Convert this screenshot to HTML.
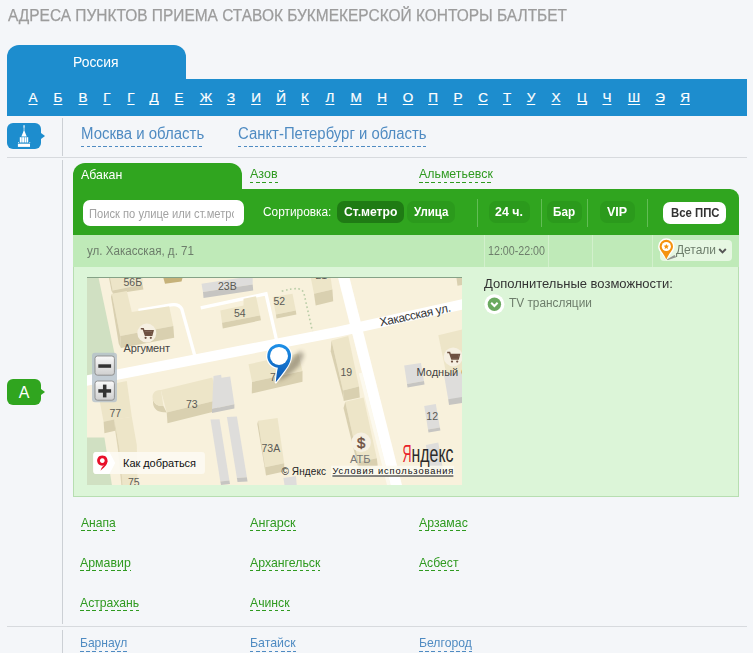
<!DOCTYPE html>
<html><head><meta charset="utf-8">
<style>
*{box-sizing:border-box;margin:0;padding:0}
html,body{width:753px;height:653px;overflow:hidden;background:#f4f6f9;font-family:"Liberation Sans",sans-serif;}
.abs{position:absolute}
.t{position:absolute;white-space:nowrap}
.t span{display:inline-block;transform-origin:0 0;white-space:nowrap}
i{font-style:normal}
#tab{left:7px;top:45px;width:179px;height:36px;background:#1d8dce;border-radius:12px 12px 0 0}
#bar{left:7px;top:79px;width:740px;height:36.500px;background:#1d8dce}
#bar a{position:absolute;top:9.600px;color:#fff;font-size:13.5px;text-decoration:underline;text-decoration-skip-ink:none;text-underline-offset:1.5px;transform:translateX(-50%);line-height:18px;-webkit-text-stroke:0.2px #fff}
.hl{height:1px;background:#d7dade;left:7px;width:740px}
.vl{width:1px;background:#ccd0d5;left:62px}
.ibox{left:7px;width:34px;height:26px;border-radius:6px}
.ibox:after{content:"";position:absolute;left:34px;top:10px;border-left:4.500px solid;border-top:3px solid transparent;border-bottom:3px solid transparent;border-left-color:inherit}
#gtab{left:73px;top:163px;width:169px;height:28px;background:#30a51f;border-radius:12px 12px 0 0}
#gbar{left:73px;top:189px;width:666px;height:46px;background:#30a51f;border-radius:0 9px 0 0}
#search{left:83px;top:200px;width:161px;height:26px;background:#fff;border-radius:7px;color:#a2a2a2;font-size:12px;line-height:26px;padding-left:5.700px;white-space:nowrap;overflow:hidden}
#search span{display:block;width:155.500px;overflow:hidden;transform:scaleX(0.93);transform-origin:0 0;position:relative;top:0.5px}
.btn{top:200.500px;height:22.500px;border-radius:7px}
.sep{top:198.500px;width:1px;height:28px;background:#62bd55}
#row{left:73px;top:235px;width:666px;height:32px;background:#bfeab8}
.rs{top:235px;width:1px;height:32px;background:#d2f0cc}
#panel{left:73px;top:267px;width:666px;height:230px;background:#dcf5d8;border:1px solid #b7deb1;border-top:none}
</style></head><body>
<div class="abs" id="tab"></div>
<div class="abs" id="bar"><a style="left:26px">А</a><a style="left:51px">Б</a><a style="left:76px">В</a><a style="left:100px">Г</a><a style="left:124px">Г</a><a style="left:147px">Д</a><a style="left:172px">Е</a><a style="left:199px">Ж</a><a style="left:224px">З</a><a style="left:249px">И</a><a style="left:274px">Й</a><a style="left:298px">К</a><a style="left:323px">Л</a><a style="left:349px">М</a><a style="left:375px">Н</a><a style="left:401px">О</a><a style="left:426px">П</a><a style="left:451px">Р</a><a style="left:476px">С</a><a style="left:500px">Т</a><a style="left:524px">У</a><a style="left:549px">Х</a><a style="left:575px">Ц</a><a style="left:600px">Ч</a><a style="left:627px">Ш</a><a style="left:653px">Э</a><a style="left:678px">Я</a></div>
<!-- region row -->
<div class="abs ibox" style="top:123px;background:#1d8dce;border-left-color:#1d8dce">
<svg width="34" height="26" viewBox="0 0 34 26" style="position:absolute;left:0;top:0"><g fill="#fff"><rect x="16.450" y="2.200" width="1.200" height="2.500"/><rect x="16.600" y="4.500" width="0.900" height="5" opacity=".8"/><path d="M16.500 8.300h1.100l2.100 5.300h-5.300z"/><rect x="12.800" y="14.200" width="1.900" height="5.300"/><rect x="15.150" y="14.200" width="1.900" height="5.300"/><rect x="17.500" y="14.200" width="1.900" height="5.300"/><rect x="19.800" y="14.200" width="1.400" height="5.300"/><rect x="11" y="19" width="0.900" height="1" opacity=".8"/><rect x="22.300" y="19" width="0.900" height="1" opacity=".8"/><rect x="10.900" y="20.700" width="12.100" height="3.200"/></g></svg>
</div>
<div class="abs vl" style="top:118px;height:38px"></div>
<div class="abs hl" style="top:157px"></div>
<div class="abs vl" style="top:160px;height:464px"></div>
<!-- A box -->
<div class="abs ibox" style="top:379px;background:#30a51f;border-left-color:#30a51f;color:#fff;font-size:16px;text-align:center;line-height:27px">A</div>
<!-- green tab -->
<div class="abs" id="gtab"></div>
<div class="abs" id="gbar"></div>
<div class="abs" id="search"><span>Поиск по улице или ст.метро</span></div>
<div class="abs btn" style="left:337px;width:67px;background:#1f7b14"></div>
<div class="abs btn" style="left:407px;width:48px;background:#2b9a1c"></div>
<div class="abs sep" style="left:477px"></div>
<div class="abs btn" style="left:488.500px;width:41px;background:#2b9a1c"></div>
<div class="abs sep" style="left:541px"></div>
<div class="abs btn" style="left:547px;width:34.500px;background:#2b9a1c"></div>
<div class="abs sep" style="left:587px"></div>
<div class="abs btn" style="left:599.500px;width:35px;background:#2b9a1c"></div>
<div class="abs sep" style="left:647px"></div>
<div class="abs btn" style="left:663px;top:202px;width:63px;height:22px;background:#fff;border-radius:7px"></div>
<!-- row -->
<div class="abs" id="row"></div>
<div class="abs rs" style="left:483.500px"></div><div class="abs rs" style="left:548px"></div><div class="abs rs" style="left:592px"></div><div class="abs rs" style="left:652px"></div>
<div class="abs" style="left:660px;top:240px;width:72px;height:21px;background:#e6f7e2;border-radius:4px"></div>
<svg class="abs" style="left:656px;top:236px" width="30" height="28" viewBox="0 0 30 28"><defs><filter id="b2"><feGaussianBlur stdDeviation=".5"/></filter></defs><path d="M10.300 23.800L18.500 19L20.200 21.300L12 24z" fill="#777" opacity=".75" filter="url(#b2)"/><path d="M10.300 2.300a8.200 8.200 0 0 1 8.200 8.200c0 5-5 7.500-8.200 14.300c-3.200-6.800-8.200-9.300-8.200-14.300a8.200 8.200 0 0 1 8.200-8.200z" fill="#fff"/><path d="M10.300 3.800a6.700 6.700 0 0 1 6.700 6.700c0 3.800-3.700 6-6.700 13c-3-7-6.700-9.200-6.700-13a6.700 6.700 0 0 1 6.700-6.700z" fill="#f5920f"/><circle cx="10.300" cy="10.500" r="4.600" fill="#fff"/><path d="M10.300 7.900l.8 1.700l1.800.2l-1.300 1.300l.3 1.800l-1.600-.9l-1.600.9l.3-1.800l-1.300-1.300l1.800-.2z" fill="#f5920f"/></svg>
<svg class="abs" style="left:718px;top:247px" width="9" height="8" viewBox="0 0 9 8"><path d="M1.200 2l3.300 3.300L7.800 2" stroke="#555" stroke-width="1.900" fill="none"/></svg>
<!-- panel -->
<div class="abs" id="panel"></div>
<svg class="abs" style="left:484px;top:294px" width="21" height="21" viewBox="0 0 21 21"><circle cx="10.400" cy="10.200" r="10" fill="#fff"/><circle cx="10.400" cy="10.200" r="6.700" fill="#6aa95f"/><path d="M7.200 8.800l3.200 3.200l3.200-3.200" stroke="#fff" stroke-width="2" fill="none"/></svg>
<div class="t" style="left:7.5px;top:6.4px;font-size:16px;line-height:19px;color:#9c9c9c;-webkit-text-stroke:0.25px #9c9c9c"><span id="t_title" style="transform:scaleX(0.9664)">АДРЕСА ПУНКТОВ ПРИЕМА СТАВОК БУКМЕКЕРСКОЙ КОНТОРЫ БАЛТБЕТ</span></div>
<div class="t" style="left:73.3px;top:53.5px;font-size:14px;line-height:17px;color:#fff"><span id="t_ros" style="transform:scaleX(0.9930)">Россия</span></div>
<div class="t" style="left:81.0px;top:124.1px;font-size:16px;line-height:19px;color:#4f8bc2"><span id="t_msk" style="transform:scaleX(0.9354)">Москва и область</span><i style="position:absolute;left:0;top:22.2px;width:123.2px;height:1px;background:repeating-linear-gradient(to right,#4f8bc2 0 3.5px,transparent 3.5px 5.6px)"></i></div>
<div class="t" style="left:238.1px;top:124.1px;font-size:16px;line-height:19px;color:#4f8bc2"><span id="t_spb" style="transform:scaleX(0.9311)">Санкт-Петербург и область</span><i style="position:absolute;left:0;top:22.2px;width:188.6px;height:1px;background:repeating-linear-gradient(to right,#4f8bc2 0 3.5px,transparent 3.5px 5.6px)"></i></div>
<div class="t" style="left:80.7px;top:166.7px;font-size:13px;line-height:16px;color:#fff"><span id="t_abk" style="transform:scaleX(0.9508)">Абакан</span></div>
<div class="t" style="left:250.1px;top:166.3px;font-size:13px;line-height:16px;color:#2f9a20"><span id="t_azov" style="transform:scaleX(0.9642)">Азов</span><i style="position:absolute;left:0;top:15.5px;width:27.6px;height:1px;background:repeating-linear-gradient(to right,#2f9a20 0 3.5px,transparent 3.5px 6.2px)"></i></div>
<div class="t" style="left:418.9px;top:166.3px;font-size:13px;line-height:16px;color:#2f9a20"><span id="t_alm" style="transform:scaleX(0.9502)">Альметьевск</span><i style="position:absolute;left:0;top:15.5px;width:73.8px;height:1px;background:repeating-linear-gradient(to right,#2f9a20 0 3.5px,transparent 3.5px 6.2px)"></i></div>
<div class="t" style="left:263.0px;top:204.0px;font-size:13px;line-height:16px;color:#fff"><span id="t_sort" style="transform:scaleX(0.9124)">Сортировка:</span></div>
<div class="t" style="left:343.7px;top:204.0px;font-size:13px;line-height:16px;color:#fff;font-weight:bold"><span id="t_stm" style="transform:scaleX(0.9343)">Ст.метро</span></div>
<div class="t" style="left:414.4px;top:204.0px;font-size:13px;line-height:16px;color:#fff;font-weight:bold"><span id="t_ul" style="transform:scaleX(0.8867)">Улица</span></div>
<div class="t" style="left:495.3px;top:204.0px;font-size:13px;line-height:16px;color:#fff;font-weight:bold"><span id="t_h24" style="transform:scaleX(0.9578)">24 ч.</span></div>
<div class="t" style="left:553.1px;top:204.0px;font-size:13px;line-height:16px;color:#fff;font-weight:bold"><span id="t_bar" style="transform:scaleX(0.9015)">Бар</span></div>
<div class="t" style="left:607.2px;top:204.0px;font-size:13px;line-height:16px;color:#fff;font-weight:bold"><span id="t_vip" style="transform:scaleX(0.9633)">VIP</span></div>
<div class="t" style="left:670.5px;top:205.8px;font-size:12px;line-height:14px;color:#333;font-weight:bold"><span id="t_vse" style="transform:scaleX(0.9461)">Все ППС</span></div>
<div class="t" style="left:86.6px;top:243.9px;font-size:12px;line-height:14px;color:#6d7d6b"><span id="t_addr" style="transform:scaleX(0.9670)">ул. Хакасская, д. 71</span></div>
<div class="t" style="left:487.7px;top:243.5px;font-size:12px;line-height:14px;color:#6d7d6b"><span id="t_time" style="transform:scaleX(0.8898)">12:00-22:00</span></div>
<div class="t" style="left:676.0px;top:242.0px;font-size:13px;line-height:16px;color:#6d7d6b"><span id="t_det" style="transform:scaleX(0.9195)">Детали</span></div>
<div class="t" style="left:484.0px;top:275.8px;font-size:13.5px;line-height:16px;color:#333"><span id="t_dop" style="transform:scaleX(0.9635)">Дополнительные возможности:</span></div>
<div class="t" style="left:509.2px;top:296.2px;font-size:12.5px;line-height:15px;color:#6d7d6b"><span id="t_tv" style="transform:scaleX(0.9483)">TV трансляции</span></div>
<div class="t" style="left:80.5px;top:514.7px;font-size:13px;line-height:16px;color:#2f9a20"><span id="t_c1" style="transform:scaleX(0.9288)">Анапа</span><i style="position:absolute;left:0;top:15.5px;width:34.7px;height:1px;background:repeating-linear-gradient(to right,#2f9a20 0 3.5px,transparent 3.5px 6.2px)"></i></div>
<div class="t" style="left:250.1px;top:514.7px;font-size:13px;line-height:16px;color:#2f9a20"><span id="t_c2" style="transform:scaleX(0.9709)">Ангарск</span><i style="position:absolute;left:0;top:15.5px;width:45.6px;height:1px;background:repeating-linear-gradient(to right,#2f9a20 0 3.5px,transparent 3.5px 6.2px)"></i></div>
<div class="t" style="left:419.4px;top:514.7px;font-size:13px;line-height:16px;color:#2f9a20"><span id="t_c3" style="transform:scaleX(0.9453)">Арзамас</span><i style="position:absolute;left:0;top:15.5px;width:48.8px;height:1px;background:repeating-linear-gradient(to right,#2f9a20 0 3.5px,transparent 3.5px 6.2px)"></i></div>
<div class="t" style="left:80.4px;top:554.7px;font-size:13px;line-height:16px;color:#2f9a20"><span id="t_c4" style="transform:scaleX(0.9501)">Армавир</span><i style="position:absolute;left:0;top:15.5px;width:50.8px;height:1px;background:repeating-linear-gradient(to right,#2f9a20 0 3.5px,transparent 3.5px 6.2px)"></i></div>
<div class="t" style="left:250.1px;top:554.7px;font-size:13px;line-height:16px;color:#2f9a20"><span id="t_c5" style="transform:scaleX(0.9472)">Архангельск</span><i style="position:absolute;left:0;top:15.5px;width:70.4px;height:1px;background:repeating-linear-gradient(to right,#2f9a20 0 3.5px,transparent 3.5px 6.2px)"></i></div>
<div class="t" style="left:419.4px;top:554.7px;font-size:13px;line-height:16px;color:#2f9a20"><span id="t_c6" style="transform:scaleX(0.9370)">Асбест</span><i style="position:absolute;left:0;top:15.5px;width:39.5px;height:1px;background:repeating-linear-gradient(to right,#2f9a20 0 3.5px,transparent 3.5px 6.2px)"></i></div>
<div class="t" style="left:80.4px;top:594.7px;font-size:13px;line-height:16px;color:#2f9a20"><span id="t_c7" style="transform:scaleX(0.9378)">Астрахань</span><i style="position:absolute;left:0;top:15.5px;width:59.2px;height:1px;background:repeating-linear-gradient(to right,#2f9a20 0 3.5px,transparent 3.5px 6.2px)"></i></div>
<div class="t" style="left:250.1px;top:594.7px;font-size:13px;line-height:16px;color:#2f9a20"><span id="t_c8" style="transform:scaleX(0.9411)">Ачинск</span><i style="position:absolute;left:0;top:15.5px;width:39.6px;height:1px;background:repeating-linear-gradient(to right,#2f9a20 0 3.5px,transparent 3.5px 6.2px)"></i></div>
<div class="t" style="left:80.4px;top:635.3px;font-size:13px;line-height:16px;color:#4f8bc2"><span id="t_c9" style="transform:scaleX(0.9263)">Барнаул</span><i style="position:absolute;left:0;top:15.5px;width:47.3px;height:1px;background:repeating-linear-gradient(to right,#4f8bc2 0 3.5px,transparent 3.5px 6.2px)"></i></div>
<div class="t" style="left:250.1px;top:635.3px;font-size:13px;line-height:16px;color:#4f8bc2"><span id="t_c10" style="transform:scaleX(0.9506)">Батайск</span><i style="position:absolute;left:0;top:15.5px;width:45.6px;height:1px;background:repeating-linear-gradient(to right,#4f8bc2 0 3.5px,transparent 3.5px 6.2px)"></i></div>
<div class="t" style="left:419.4px;top:635.3px;font-size:13px;line-height:16px;color:#4f8bc2"><span id="t_c11" style="transform:scaleX(0.9366)">Белгород</span><i style="position:absolute;left:0;top:15.5px;width:52.8px;height:1px;background:repeating-linear-gradient(to right,#4f8bc2 0 3.5px,transparent 3.5px 6.2px)"></i></div>
<div class="abs" style="left:87px;top:277px;width:375px;height:1px;background:#86a287"></div>
<!-- MAP -->
<div class="abs" id="map" style="left:87px;top:278px;width:375px;height:207px;overflow:hidden;background:#f8f1dc">
<svg width="375" height="207" viewBox="0 0 375 207" style="position:absolute;left:0;top:0" font-family="Liberation Sans, sans-serif">
<rect width="375" height="207" fill="#f8f1dc"/>
<!-- green areas -->
<path d="M0 0H11.600L27.400 75L29 100H0z" fill="#d0e0c2"/>
<path d="M0 159.400H17.400L24.900 207H0z" fill="#d0e0c2"/>
<!-- small roads -->
<path d="M51.500 32.400L84 26.800Q92 25.500 94.800 31L109 82" stroke="#fff" stroke-width="3.300" fill="none"/>
<path d="M113.700 29.900L179 15.800L189.500 62" stroke="#fff" stroke-width="3.300" fill="none" stroke-linejoin="miter"/>
<path d="M194.700 13.300Q205 10 211.300 10.800Q216 11.500 217.100 16L225.400 53.100" stroke="#b9cca6" stroke-width="1.600" stroke-dasharray="1.600 2.600" fill="none"/>
<!-- main road -->
<path d="M-5 103.500L93 84.600L250 54L380 25.400" stroke="#fff" stroke-width="10.200" fill="none" stroke-linejoin="round"/>
<!-- cross road -->
<path d="M255.600 -5L310.500 212" stroke="#fff" stroke-width="11.150"/>
<path d="M273.500 95L301.800 207" stroke="#fcf9ee" stroke-width="3.500"/>
<!-- buildings -->
<g>
<!-- 56B -->
<path d="M23.200 0H55.600V6.600L25.700 12.500z" fill="#ede5c8"/><path d="M25.700 12.500L55.600 6.600L56.400 11.600L26.400 16z" fill="#d9d0b0"/>
<!-- Argument -->
<path d="M24.900 15.800L39.800 12.900L44.800 34L82.200 28.200L86.300 48.100L33.200 58.100z" fill="#ede5c8"/><path d="M33.200 58.100L86.300 48.100L87.200 59.800L34 70z" fill="#d9d0b0"/>
<path d="M24.900 15.800L33.200 58.100L34 70L31.800 66L24 19z" fill="#d9d0b0"/><path d="M23.200 0L25.700 12.500L26.400 16L24.500 13L22 0z" fill="#d9d0b0"/>
<!-- yellow thing -->
<path d="M76.400 0H95.500L94.500 3.500L78 5.800z" fill="#c6b27a"/>
<!-- 23B grey -->
<path d="M114.500 5.800L165.700 -2V6.600L116 14z" fill="#dedddb"/><path d="M116 14L165.700 6.600L166.200 12.400L116.500 19.900z" fill="#c6c5c2"/>
<!-- 54 -->
<path d="M133.300 32.400L156.500 27.400L156.500 20.700L169 18.300L173.100 37.400L135 44.800z" fill="#ede5c8"/><path d="M135 44.800L173.100 37.400L174 42.300L135.800 50.600z" fill="#d9d0b0"/>
<!-- 52 -->
<path d="M185.600 19.100L205.500 15.800L208.800 32.400L188.900 36.500z" fill="#ede5c8"/><path d="M188.900 36.500L208.800 32.400L209.400 36.400L189.500 40.500z" fill="#d9d0b0"/>
<!-- 21 -->
<path d="M223.800 0H243.700L245.400 11.600L227 15.800z" fill="#ede5c8"/><path d="M227 15.800L245.400 11.600L246.200 23.200L228.700 27.400z" fill="#d9d0b0"/>
<!-- top right -->
<path d="M369.500 0H375V7L370.500 7.800z" fill="#d9d0b0"/>
<!-- 71 -->
<path d="M161.500 86.300L211.300 75.500L215.500 93L165 104z" fill="#ede5c8"/><path d="M165 104L215.500 93V103.800L164.800 115.500z" fill="#d9d0b0"/>
<!-- 19 -->
<path d="M244.500 62.600L261.300 58L272 108.500L256 112.400z" fill="#ede5c8"/><path d="M244.500 62.600L256 112.400L256.700 122L243.700 73.300z" fill="#d9d0b0"/><path d="M256 112.400L272 108.500L272.800 119.600L256.700 123z" fill="#d9d0b0"/>
<!-- ATB building -->
<path d="M258.300 123.800L276.600 119.600L289.800 180.200L271.600 184z" fill="#ede5c8"/><path d="M258.300 123.800L271.600 184L271.600 191L256.500 130z" fill="#d9d0b0"/><path d="M271.600 184L289.800 180.200L290.700 187.700L271.600 191.500z" fill="#d9d0b0"/>
<!-- 73 -->
<path d="M65.800 121C67 126 71 128.500 76.400 127.900L79.700 134.500L77.500 134.200C71 134.500 67 131 66.200 126.500Z" fill="#d9d0b0"/><path d="M73.900 112.100C68 111.500 64.500 116 65.800 121C67 126 71 128.500 76.400 127.900Z" fill="#ede5c8"/>
<path d="M73.900 112.100L125.400 99.500L131 122L79.700 134.500z" fill="#ede5c8"/><path d="M79.700 134.500L131 122L131.500 132.500L80.500 145.300z" fill="#d9d0b0"/>
<path d="M126.500 98L134.100 96.800L134.500 99.800L143.200 98.600L147.400 126.200L125 131z" fill="#dedddb"/><path d="M125 131L147.400 126.200L147.400 130.400L125 135z" fill="#c6c5c2"/>
<!-- 77/75 -->
<path d="M10 109L39.800 103L44.800 138.700L16.600 143.700z" fill="#ede5c8"/><path d="M16.600 143.700L27.400 141.500L28.200 152.800L17.400 155.300z" fill="#d9d0b0"/>
<path d="M27.400 141.500L44.800 138.700L49.800 166.900L50.600 207H35.700L32.400 170.200z" fill="#ede5c8"/><path d="M27.400 141.500L32.400 170.200L35.700 207H34.300L31 172L28.200 152.800z" fill="#dfd6b6"/>
<!-- grey long -->
<path d="M123.500 141.500L132.500 141.200L142.400 202.600L133.300 203.500z" fill="#dedddb"/><path d="M133.300 203.500L142.400 202.600L143 206L134 207z" fill="#c6c5c2"/>
<path d="M139.900 139L149.900 138.500L159.900 199.300L149.900 200z" fill="#dedddb"/><path d="M149.900 200L159.900 199.300L160.500 203.400L150.500 204z" fill="#c6c5c2"/>
<!-- 73A -->
<path d="M171.100 142.800L190.600 139.900L197.200 185.200L178.100 189.300z" fill="#ede5c8"/><path d="M178.100 189.300L197.200 185.200L197.200 193.500L179 197.600z" fill="#d9d0b0"/><path d="M171.100 142.800L178.100 189.300L179 197.600L170.300 146z" fill="#d9d0b0"/>
<path d="M196.400 200L209 198L209.700 207H197.500z" fill="#dedddb"/>
<!-- right: Модный -->
<path d="M351.300 57.300L375 51.500V104H361z" fill="#ede5c8"/>
<path d="M357 97L375 94V121L361.200 121.300z" fill="#dedddb"/><path d="M361.200 121.300L375 119V125L362 127z" fill="#c6c5c2"/>
<path d="M317.200 87.500L334 85L337 103L320 106z" fill="#dedddb"/><path d="M320 106L337 103L337.500 106.500L320.500 109.500z" fill="#c6c5c2"/>
<!-- 12 -->
<path d="M337.200 127.900L348.800 125.900L352.900 149.500L341 151.500z" fill="#dedddb"/><path d="M341 151.500L352.900 149.500L353.400 152.500L341.500 154.500z" fill="#c6c5c2"/>
<path d="M338.800 166.900L351.300 164.400L355.400 187.700L343 189.300z" fill="#dedddb"/><path d="M343 189.300L355.400 187.700L355.900 190.700L343.500 192.300z" fill="#c6c5c2"/>
</g>
<!-- labels -->
<g font-size="10.500" fill="#5a5a55">
<text x="36.500" y="7.500">56Б</text><text x="131" y="12.400">23В</text><text x="147" y="38.500">54</text><text x="186.500" y="26.600">52</text>
<text x="99" y="130.400">73</text><text x="22.500" y="138.700">77</text><text x="41" y="207.500">75</text><text x="174.500" y="173.600">73А</text>
<text x="253.500" y="97.500">19</text><text x="339.300" y="141.500">12</text><text x="183" y="102.500">7</text><text x="228.500" y="1.300">21</text>
</g>
<g font-size="11" fill="#444">
<text x="36.500" y="73.900" textLength="46.500">Аргумент</text><text x="329.500" y="97.900">Модный С</text><text x="263" y="184.700" fill="#777">АТБ</text>
<text transform="translate(293.500 48.300) rotate(-11.850)" font-size="12" fill="#333" textLength="72.500">Хакасская ул.</text>
</g>
<!-- poi icons -->
<defs><g id="cart"><circle cx="0" cy="0" r="9.500" fill="#f6f0e2"/><path d="M-6 -4.300h2.400l2.200 6.500h6.400l1.200-4.500h-9" stroke="#6e5142" stroke-width="1.500" fill="none"/><path d="M-2.700 -1.800h8.300l-1 3.600h-6z" fill="#6e5142"/><circle cx="-1.200" cy="4.700" r="1.100" fill="#6e5142"/><circle cx="4" cy="4.700" r="1.100" fill="#6e5142"/></g></defs><use href="#cart" x="59.800" y="55.100"/><use href="#cart" x="366.200" y="78.900"/>
<circle cx="274.100" cy="164.400" r="9.800" fill="#f6f0e2"/><text x="269.900" y="169.800" font-size="15" fill="#6e5142" stroke="#6e5142" stroke-width=".4">$</text>
<!-- pin -->
<defs><linearGradient id="pg" x1="0" y1="0" x2="0" y2="1"><stop offset="0" stop-color="#1e90e8"/><stop offset="1" stop-color="#0a55b0"/></linearGradient>
<filter id="bl" x="-50%" y="-50%" width="200%" height="200%"><feGaussianBlur stdDeviation="2"/></filter></defs>
<path d="M189 104L199 89L207 78L214 73L217 77L212 88L201 98z" fill="#3a3222" opacity=".38" filter="url(#bl)"/>
<path d="M190.900 89.700A11.850 11.850 0 1 1 203.700 80.500C203 87 196 95 188.800 104.200C189.300 99 189.800 94 190.900 89.700Z" fill="url(#pg)" stroke="#fff" stroke-width="2.400" stroke-linejoin="round" paint-order="stroke"/>
<circle cx="192" cy="77.900" r="9" fill="#fff"/>
<!-- zoom ctrl -->
<defs><linearGradient id="bg" x1="0" y1="0" x2="0" y2="1"><stop offset="0" stop-color="#fafafa"/><stop offset="1" stop-color="#cfcfcf"/></linearGradient></defs>
<rect x="5" y="74.700" width="25" height="49.500" rx="3" fill="#b4c0ca" opacity=".8"/>
<rect x="8" y="78" width="19.400" height="19.200" rx="2.500" fill="url(#bg)" stroke="#8a8a8a" stroke-width=".9"/><rect x="11.300" y="86.300" width="12.800" height="3.500" fill="#333"/>
<rect x="8" y="103" width="19.400" height="19.200" rx="2.500" fill="url(#bg)" stroke="#8a8a8a" stroke-width=".9"/><rect x="11.300" y="111.200" width="12.800" height="3.500" fill="#333"/><rect x="15.950" y="106.600" width="3.500" height="12.800" fill="#333"/>
<!-- how to get -->
<rect x="6.300" y="174" width="111.600" height="22" rx="3" fill="#fcfaf1" opacity=".93"/>
<path d="M9.300 174h13.100l5.800 11l-5.800 11H9.300a3 3 0 0 1-3-3v-16a3 3 0 0 1 3-3z" fill="#fff"/>
<path d="M15.300 177.400a5.200 5.200 0 1 0 .01 0zM15.300 180.200a2.400 2.400 0 1 1 -.01 0z" fill="#e8102a" fill-rule="evenodd"/><path d="M20.500 182.600C20.500 187.800 16.500 189.500 13.600 192.800C14 190 15.500 188.500 17 187.300Z" fill="#e8102a"/>
<text x="36" y="189" font-size="11" fill="#111" textLength="73">Как добраться</text>
<!-- copyright -->
<rect x="244.200" y="187.700" width="123" height="11.300" fill="#fcfaf1" opacity=".85"/>
<text x="194.500" y="196.800" font-size="10" fill="#222" textLength="44.500">© Яндекс</text>
<text x="245.400" y="196" font-size="9.300" fill="#111" textLength="121">Условия использования</text>
<rect x="245.400" y="197.500" width="121" height="1" fill="#111"/>
<!-- Yandex logo -->
<text x="315.500" y="183.500" font-size="23" fill="#e8232b" textLength="9" lengthAdjust="spacingAndGlyphs">Я</text>
<text x="324.500" y="183.500" font-size="23" fill="#2a2a2a" textLength="42" lengthAdjust="spacingAndGlyphs">ндекс</text>
</svg>

</div>
<div class="abs hl" style="top:626px"></div>
<div class="abs vl" style="top:630px;height:23px"></div>
</body></html>
